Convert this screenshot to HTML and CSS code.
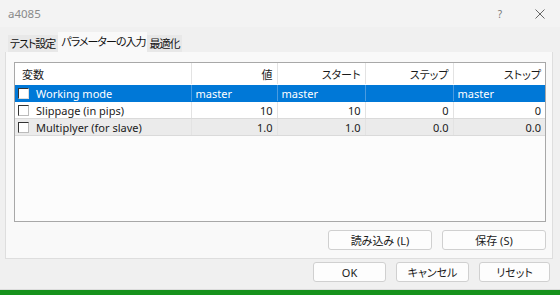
FILE: index.html
```html
<!DOCTYPE html>
<html lang="ja">
  <head>
    <meta charset="UTF-8" />
    <title>a4085</title>
    <link rel="stylesheet" href="styles.css">
  </head>
  <body>
    <div class="window">
      <!-- タイトルバー -->
      <div class="titlebar">
        <span class="title">a4085</span>
        <span class="tb-btn help">?</span>
        <span class="tb-btn close">
          <svg width="10" height="10" viewBox="0 0 10 10">
            <path d="M0.5 0.5L9.5 9.5M9.5 0.5L0.5 9.5" stroke="#666" stroke-width="1" fill="none" />
          </svg>
        </span>
      </div>

      <!-- タブ -->
      <div class="tabs">
        <div class="tab">テスト設定</div>
        <div class="tab active">パラメーターの入力</div>
        <div class="tab">最適化</div>
      </div>

      <div class="panel">
        <div class="grid">
          <table>
            <colgroup>
              <col class="c-name" />
              <col class="c-val" />
              <col class="c-start" />
              <col class="c-step" />
              <col class="c-stop" />
            </colgroup>
            <thead>
              <tr>
                <th class="left">変数</th>
                <th>値</th>
                <th>スタート</th>
                <th>ステップ</th>
                <th>ストップ</th>
              </tr>
            </thead>
            <tbody>
              <tr class="selected">
                <td class="left"><span class="check"></span>Working mode</td>
                <td class="left">master</td>
                <td class="left">master</td>
                <td></td>
                <td class="left">master</td>
              </tr>
              <tr>
                <td class="left"><span class="check"></span>Slippage (in pips)</td>
                <td>10</td>
                <td>10</td>
                <td>0</td>
                <td>0</td>
              </tr>
              <tr class="alt">
                <td class="left"><span class="check"></span>Multiplyer (for slave)</td>
                <td>1.0</td>
                <td>1.0</td>
                <td>0.0</td>
                <td>0.0</td>
              </tr>
            </tbody>
          </table>
        </div>
        <div class="panel-buttons">
          <button class="load">読み込み (L)</button>
          <button class="save">保存 (S)</button>
        </div>
      </div>

      <div class="footer">
        <button class="ok">OK</button>
        <button class="cancel">キャンセル</button>
        <button class="reset">リセット</button>
      </div>

      <div class="statusbar"></div>
    </div>
  </body>
</html>
```

FILE: styles.css
```css
body {
  margin: 0;
  font-family: "Noto Sans", "Noto Sans CJK JP", sans-serif;
  font-size: 11px;
  font-feature-settings: "palt";
  color: #1a1a1a;
}
.window {
  width: 560px;
  height: 295px;
  background: #f0f0f0;
  display: flex;
  flex-direction: column;
  overflow: hidden;
}
.titlebar {
  height: 27px;
  background: #f3f3f3;
  display: flex;
  align-items: center;
  padding-left: 8px;
  flex-shrink: 0;
}
.title {
  color: #8a8a8a;
  font-size: 11.5px;
  flex: 1;
}
.tb-btn {
  color: #777;
  width: 40px;
  display: flex;
  justify-content: center;
}
.help {
  font-size: 10px;
}
.tabs {
  display: flex;
  align-items: flex-end;
  height: 20px;
  margin-top: 5px;
  padding-left: 8px;
}
.tab {
  height: 17px;
  line-height: 17px;
  padding: 0 3px 0 2px;
  letter-spacing: -1px;
  background: #e8e8e8;
  color: #111;
}
.tab.active {
  height: 20px;
  line-height: 20px;
  padding: 0 2px 0 3px;
  background: #f9f9f9;
}
.panel {
  margin: 0 7px 0 5px;
  height: 207px;
  background: #f9f9f9;
  border: 1px solid #dedede;
  border-top: none;
  display: flex;
  flex-direction: column;
  padding: 10px 6px 0 8px;
  box-sizing: border-box;
}
.grid {
  height: 160px;
  border: 1px solid #a8a8a8;
  background: #fcfcfc;
  box-sizing: border-box;
}
table {
  width: 100%;
  border-collapse: collapse;
  table-layout: fixed;
}
col.c-name { width: 176px; }
col.c-val { width: 86px; }
col.c-start { width: 88px; }
col.c-step { width: 88px; }
th {
  height: 21px;
  font-weight: normal;
  text-align: right;
  padding: 0 4px;
  background: #fff;
  border-left: 1px solid #e3e3e3;
  border-bottom: 1px solid #fff;
}
td {
  height: 16px;
  padding: 0 4px;
  text-align: right;
  border-left: 1px solid #e3e3e3;
  border-bottom: 1px solid #dadada;
  background: #fff;
  white-space: nowrap;
}
th:first-child,
td:first-child {
  border-left: none;
}
th.left,
td.left {
  text-align: left;
}
th.left {
  padding-left: 7px;
}
td:first-child {
  padding-left: 3px;
}
tr.alt td {
  background: #ebebeb;
}
tr.selected td {
  background: #0078d7;
  color: #fff;
  border-left-color: #4a9be0;
  border-bottom-color: #0078d7;
}
.check {
  display: inline-block;
  width: 9px;
  height: 9px;
  border: 1px solid #333;
  border-right-color: #bbb;
  border-bottom-color: #bbb;
  background: #fff;
  vertical-align: -1px;
  margin-right: 7px;
}
tr.selected .check {
  border-right-color: #ddd;
  border-bottom-color: #ddd;
}
.panel-buttons {
  display: flex;
  justify-content: flex-end;
  gap: 10px;
  margin-top: 8px;
}
button {
  font-family: inherit;
  font-size: 11px;
  font-feature-settings: "palt";
  color: #1a1a1a;
  background: #fdfdfd;
  border: 1px solid #d0d0d0;
  border-radius: 3px;
  padding: 0;
  height: 20px;
}
.load,
.save {
  width: 104px;
}
.footer {
  display: flex;
  justify-content: flex-end;
  gap: 10px;
  padding-right: 10px;
  margin-top: 3px;
}
.ok {
  width: 73px;
}
.cancel {
  width: 73px;
}
.reset {
  width: 71px;
}
.statusbar {
  margin-top: auto;
  height: 5px;
  background: #16921c;
  border-top: 1px solid #dcdcdc;
}
```
